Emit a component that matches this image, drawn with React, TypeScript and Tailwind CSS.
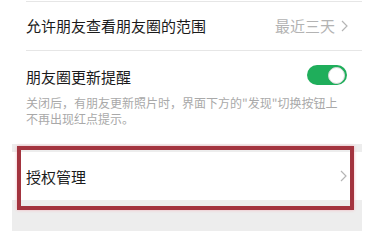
import React from "react";

const FONT = { fontFamily: '"Noto Sans CJK SC", "Noto Sans", sans-serif' };

function Chevron() {
  return (
    <svg width="7" height="12" viewBox="0 0 7 12" className="shrink-0">
      <polyline points="1,1 6,6 1,11" fill="none" stroke="#b5b5b5" strokeWidth="1.2" />
    </svg>
  );
}

function Toggle() {
  return (
    <div className="w-[40px] h-[20px] rounded-full bg-[#1fae5b] flex items-center justify-end pr-[2px]">
      <div className="w-[17px] h-[17px] rounded-full bg-white border border-[#d8d8d8]" />
    </div>
  );
}

export default function App() {
  return (
    <div className="relative w-[369px] h-[231px] bg-white overflow-hidden" style={FONT}>
      <div className="ml-[12px] w-[350px] h-full flex flex-col">
        <div className="pl-[14px]">
          <div className="h-px mt-px bg-[#e6e6e6]" />
          <div className="h-[48px] flex items-center justify-between pr-[14px]">
            <span className="text-[15px] text-[#1b1b1b]">允许朋友查看朋友圈的范围</span>
            <div className="flex items-center gap-[6px]">
              <span className="text-[15px] text-[#b3b3b3]">最近三天</span>
              <Chevron />
            </div>
          </div>
          <div className="h-px bg-[#e6e6e6]" />
          <div className="pt-[14px] flex justify-between items-start pr-[15px]">
            <span className="pt-[2px] text-[15px] leading-[20px] text-[#1b1b1b]">朋友圈更新提醒</span>
            <Toggle />
          </div>
          <p className="mt-[8px] pb-[17px] text-[12px] leading-[16px] text-[#a9a9a9]">
            关闭后，有朋友更新照片时，界面下方的"发现"切换按钮上
            <br />
            不再出现红点提示。
          </p>
        </div>
        <div className="flex-1 bg-[#ededed] pt-[8px]">
          <div className="h-[48px] bg-white flex items-center justify-between pl-[14px] pr-[15px]">
            <span className="pt-[3px] text-[15px] text-[#1b1b1b]">授权管理</span>
            <Chevron />
          </div>
        </div>
      </div>
      <div className="absolute left-[17px] top-[146px] w-[337px] h-[64px] border-[4px] border-[#a3343f] shadow-[0_0_3px_#f2b5bd]" />
    </div>
  );
}
